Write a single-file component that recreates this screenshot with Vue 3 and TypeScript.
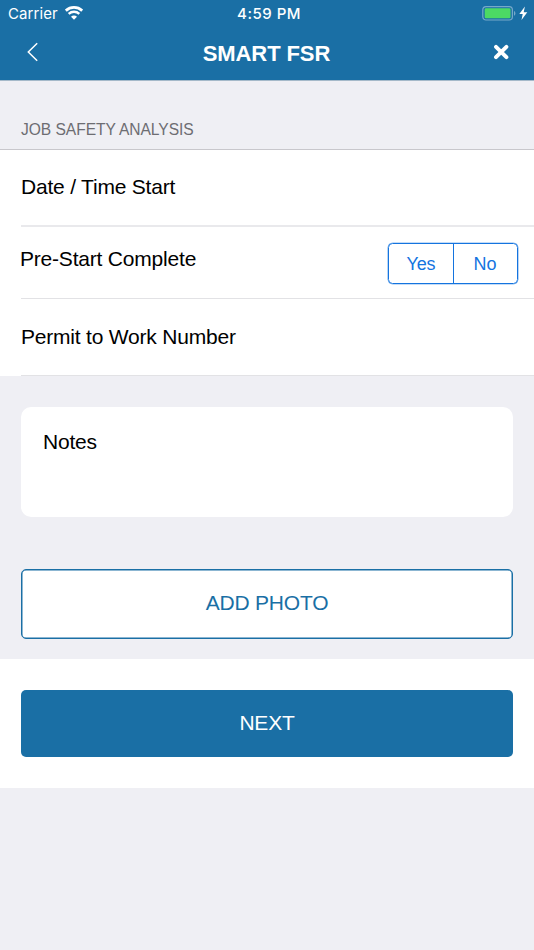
<script setup lang="ts">
import { ref } from 'vue'

const answers: string[] = ['Yes', 'No']
const preStart = ref<string | null>(null)
</script>

<template>
  <main class="screen">
    <header class="header">
      <div class="status">
        <div class="carrier">
          <span>Carrier</span>
          <svg class="wifi" width="18" height="14" viewBox="0 0 18 14" fill="none" stroke="#fff">
            <path d="M.8 4.7A12 12 0 0 1 17.2 4.7" stroke-width="2.7" />
            <path d="M3.7 7.9A7.7 7.7 0 0 1 14.3 7.9" stroke-width="2.4" />
            <path d="M9 13.8 6 10.8A4.2 4.2 0 0 1 12 10.8Z" fill="#fff" stroke="none" />
          </svg>
        </div>
        <span class="time">4:59 PM</span>
        <div class="power">
          <svg width="46" height="16" viewBox="0 0 46 16">
            <rect x=".8" y=".6" width="29.6" height="13.4" rx="3.2" fill="none" stroke="#76a9c9" stroke-width="1.2" />
            <rect x="2.7" y="2.3" width="25.8" height="10" rx="1.3" fill="#4cd964" />
            <path d="M32 5Q33.4 5.5 33.4 7.4T32 9.8Z" fill="#76a9c9" />
            <path d="M42.9 .6 37.3 8.1H40.7L39.5 14 45.3 6.2H41.7Z" fill="#fff" />
          </svg>
        </div>
      </div>
      <nav class="nav">
        <button class="icon" aria-label="Back">
          <svg width="12" height="20" viewBox="0 0 12 20" fill="none" stroke="#fff" stroke-width="1.5">
            <path d="M10.2 1.2 1.3 10 10.2 18.8" />
          </svg>
        </button>
        <h1>SMART FSR</h1>
        <button class="icon" aria-label="Close">
          <svg width="16" height="16" viewBox="0 0 16 16" fill="none" stroke="#fff" stroke-width="3.9" stroke-linecap="round">
            <path d="M3 2.8 13.4 13.2M13.4 2.8 3 13.2" />
          </svg>
        </button>
      </nav>
    </header>

    <h2>JOB SAFETY ANALYSIS</h2>
    <section class="rows">
      <div class="row date"><span>Date / Time Start</span></div>
      <div class="row prestart">
        <span>Pre-Start Complete</span>
        <div class="segments">
          <button v-for="answer in answers" :key="answer" @click="preStart = answer">{{ answer }}</button>
        </div>
      </div>
      <div class="row permit"><span>Permit to Work Number</span></div>
    </section>

    <section class="extras">
      <div class="notes">Notes</div>
      <button class="photo">ADD PHOTO</button>
    </section>
    <footer>
      <button class="next">NEXT</button>
    </footer>
  </main>
</template>

<style>
body {
  background: #efeff4;
}
</style>

<style scoped>
.screen {
  min-height: 950px;
  font-family: "Liberation Sans", Arial, sans-serif;
  font-size: 21px;
  letter-spacing: -0.2px;
  line-height: 24px;
  color: #000;
  background: #efeff4;
}
*, *::before, *::after {
  box-sizing: border-box;
}
button {
  margin: 0;
  padding: 0;
  font: inherit;
  letter-spacing: inherit;
  background: none;
  border: 0;
}
svg {
  display: block;
}
.header {
  height: 81px;
  color: #fff;
  background: #1a6fa5;
  border-bottom: 1px solid #a5b9c9;
}
.status {
  display: grid;
  grid-template-columns: 1fr auto 1fr;
  height: 27px;
  padding: 0 6px 0 8px;
  font-family: Inter, sans-serif;
  font-size: 15px;
  line-height: 28px;
}
.carrier {
  display: flex;
  gap: 7px;
  letter-spacing: 0.1px;
}
.wifi {
  margin-top: 6px;
}
.time {
  padding-left: 2px;
  font-weight: 500;
  letter-spacing: 0.5px;
}
.power {
  display: flex;
  justify-content: flex-end;
  padding-top: 6px;
}
.nav {
  display: flex;
  align-items: center;
  justify-content: space-between;
  height: 50px;
  padding: 0 25px 0 27px;
}
.icon {
  display: block;
}
h1 {
  margin: 3px 0 0 1px;
  font-size: 22px;
  font-weight: 700;
  letter-spacing: -0.1px;
}
h2 {
  height: 69px;
  margin: 0;
  padding: 38px 21px 0;
  font-size: 15.6px;
  font-weight: 400;
  line-height: 22px;
  letter-spacing: -0.05px;
  color: #6d6d72;
  border-bottom: 1px solid #c8c7cc;
}
.rows {
  background: #fff;
}
.row {
  display: flex;
  padding-left: 21px;
  background: linear-gradient(#e2e2e5, #e2e2e5) 21px 100% / 100% 1px no-repeat;
}
.date {
  height: 77px;
  padding-top: 25px;
  background-size: 100% 2px;
  background-image: linear-gradient(#e9e9ec, #e9e9ec);
}
.prestart {
  justify-content: space-between;
  height: 72px;
  padding: 20px 16px 0 20px;
}
.permit {
  height: 77px;
  padding-top: 26px;
}
.segments {
  display: grid;
  grid-template-columns: 64px 1fr;
  width: 130px;
  height: 41px;
  margin-top: -4px;
  border: 1px solid #1474df;
  border-radius: 4.5px;
  box-shadow: 0 0 0 0.3px #1474df;
}
.segments button {
  font-size: 18px;
  letter-spacing: -0.1px;
  color: #1474df;
}
.segments button + button {
  padding-right: 1px;
  border-left: 1px solid #1474df;
}
.extras {
  display: flex;
  flex-direction: column;
  gap: 52px;
  padding: 31px 21px 20.4px;
}
.notes {
  height: 110px;
  padding: 23px 22px;
  background: #fff;
  border-radius: 10px;
}
.photo {
  height: 70px;
  padding-bottom: 2px;
  color: #1a6fa5;
  background: #fff;
  border: 1px solid #1a6fa5;
  border-radius: 5px;
  box-shadow: inset 0 0 0 0.5px #1a6fa5;
}
footer {
  height: 129px;
  padding: 31px 21px;
  background: #fff;
}
.next {
  width: 100%;
  height: 67px;
  padding-bottom: 1px;
  color: #fff;
  background: #1a6fa5;
  border-radius: 5px;
}
</style>
